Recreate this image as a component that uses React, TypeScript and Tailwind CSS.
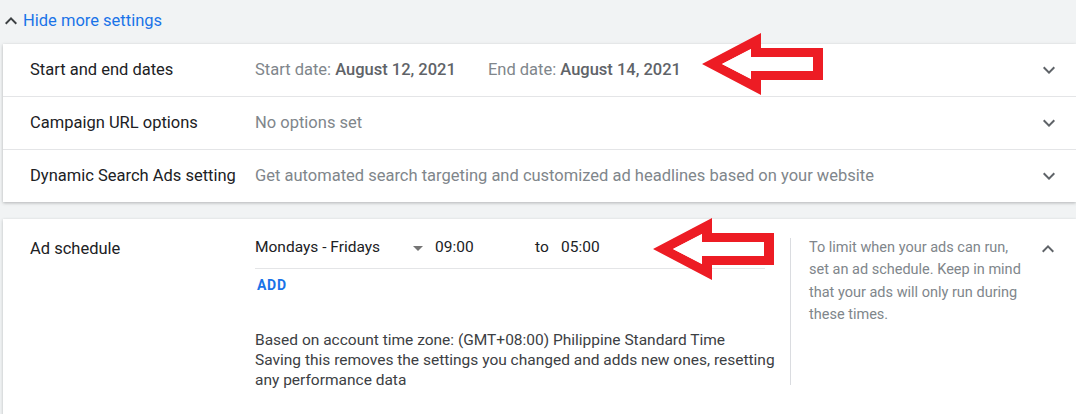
import React from "react";

const ChevronDown = () => (
  <svg width="24" height="24" viewBox="0 0 24 24" className="fill-[#5f6368]">
    <path d="M16.59 8.59L12 13.17 7.41 8.59 6 10l6 6 6-6z" />
  </svg>
);

const ChevronUp = ({ cls = "fill-[#5f6368]" }: { cls?: string }) => (
  <svg width="24" height="24" viewBox="0 0 24 24" className={cls}>
    <path d="M12 8l-6 6 1.41 1.41L12 10.83l4.59 4.58L18 14z" />
  </svg>
);

const Arrow = ({ className }: { className: string }) => (
  <svg width="122" height="63" viewBox="0 0 122 63" className={className}>
    <path
      fillRule="evenodd"
      fill="#ed1c24"
      d="M0 31 L59 0 L59 15 L121 15 L121 47 L59 47 L59 62 Z M20 31 L49 16 L49 24 L111 24 L111 38 L49 38 L49 46 Z"
    />
    <path fill="#ffffff" d="M20 31 L49 16 L49 24 L111 24 L111 38 L49 38 L49 46 Z" />
  </svg>
);

function Row({ label, children, first }: { label: string; children: React.ReactNode; first?: boolean }) {
  return (
    <div className={`flex items-center ${first ? "h-[52px]" : "h-[53px] border-t border-[#e4e5e7]"}`}>
      <div className="w-[252px] pl-[27px] text-[16.5px] text-[#202124] shrink-0">{label}</div>
      <div className="flex-1 text-[16.5px] text-[#80868b] whitespace-nowrap">{children}</div>
      <div className="pr-[15px] flex items-center">
        <ChevronDown />
      </div>
    </div>
  );
}

export default function App() {
  return (
    <div className="w-[1076px] h-[414px] bg-[#f1f3f4] overflow-hidden relative font-['Roboto',sans-serif]">
      <div className="h-[44px] flex items-center pb-[2px]">
        <div className="ml-[-1px]">
          <ChevronUp cls="fill-[#3c4043]" />
        </div>
        <span className="text-[16.5px] text-[#1a73e8]">Hide more settings</span>
      </div>

      <div className="ml-[3px] bg-white shadow-[0_1px_3px_rgba(60,64,67,0.35)]">
        <Row label="Start and end dates" first>
          <span>Start date: </span>
          <span className="text-[#5f6368] font-medium">August 12, 2021</span>
          <span className="ml-[32px]">End date: </span>
          <span className="text-[#5f6368] font-medium">August 14, 2021</span>
        </Row>
        <Row label="Campaign URL options">No options set</Row>
        <Row label="Dynamic Search Ads setting">
          Get automated search targeting and customized ad headlines based on your website
        </Row>
      </div>

      <div className="ml-[3px] mt-[17px] bg-white shadow-[0_1px_3px_rgba(60,64,67,0.3)] h-[220px] flex">
        <div className="w-[252px] pl-[27px] pt-[20px] shrink-0 text-[16.5px] leading-[20px] text-[#202124]">
          Ad schedule
        </div>
        <div className="w-[535px] pt-[19px] shrink-0">
          <div className="h-[20px] flex items-center text-[15.5px] text-[#202124]">
            <span className="w-[158px]">Mondays - Fridays</span>
            <svg width="10" height="5" viewBox="0 0 10 5" className="fill-[#757575]">
              <path d="M0 0 L10 0 L5 5 Z" />
            </svg>
            <span className="ml-[12px] w-[100px]">09:00</span>
            <span className="w-[26px]">to</span>
            <span>05:00</span>
          </div>
          <div className="mt-[10px] w-[510px] border-b border-[#e4e5e7]" />
          <div className="mt-[8px] text-[14px] leading-[16px] font-bold tracking-[0.7px] text-[#1a73e8] pl-[2px]">
            ADD
          </div>
          <div className="mt-[37px] pr-[4px] text-[15.5px] leading-[20px] text-[#3c4043]">
            <div>Based on account time zone: (GMT+08:00) Philippine Standard Time</div>
            <div>Saving this removes the settings you changed and adds new ones, resetting any performance data</div>
          </div>
        </div>
        <div className="mt-[19px] w-px h-[147px] bg-[#dadce0] shrink-0" />
        <div className="pl-[18px] pt-[18px] w-[232px] shrink-0 text-[14.5px] leading-[22.3px] text-[#80868b]">
          To limit when your ads can run, set an ad schedule. Keep in mind that your ads will only run during these times.
        </div>
        <div className="pt-[18px] ml-[13px]">
          <ChevronUp />
        </div>
      </div>

      <Arrow className="absolute left-[702px] top-[33px]" />
      <Arrow className="absolute left-[653px] top-[218px]" />
    </div>
  );
}
